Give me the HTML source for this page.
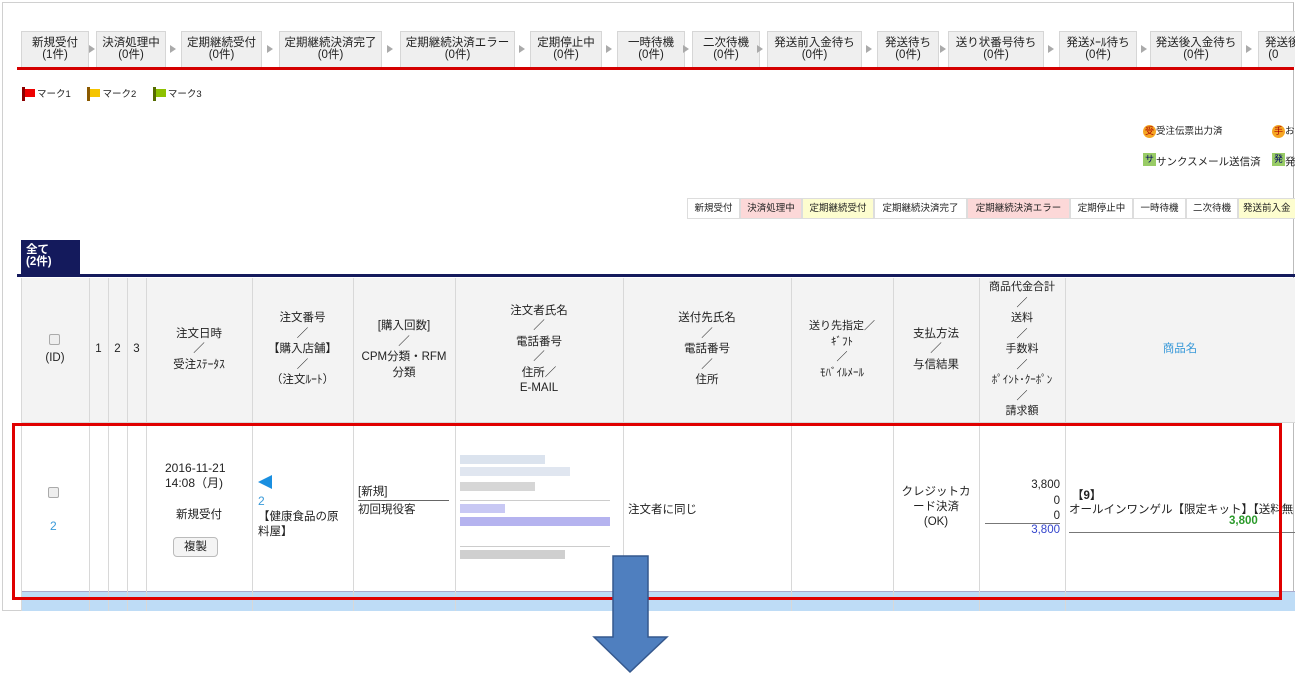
<!DOCTYPE html>
<html><head><meta charset="utf-8">
<style>
*{margin:0;padding:0;box-sizing:border-box}
body{width:1295px;height:674px;background:#fff;position:relative;overflow:hidden;font-family:"Liberation Sans","Noto Sans CJK JP",sans-serif;font-size:11px;color:#222}
.a{position:absolute}
.frame{left:2px;top:2px;width:1292px;height:609px;border:1px solid #d0d0d0;border-right:1px solid #bbb}
.tab{position:absolute;top:31px;height:36px;background:#efefef;border:1px solid #d6d6d6;border-bottom:none;text-align:center;font-size:11.5px;line-height:12px;padding-top:5px;white-space:nowrap;overflow:hidden}
.tri{position:absolute;top:45px;width:0;height:0;border-left:6px solid #aaa;border-top:4px solid transparent;border-bottom:4px solid transparent}
.leg{position:absolute;top:198px;height:21px;border:1px solid #ddd;font-size:9.5px;line-height:19px;text-align:center;white-space:nowrap;overflow:hidden}
.col{position:absolute;top:278px;height:333px;border-left:1px solid #d8d8d8}
.h{position:absolute;top:278px;height:144px;display:flex;align-items:center;justify-content:center;text-align:center;font-size:11.5px;line-height:15.5px;background:#f3f3f3}
.cb{width:11px;height:11px;border:1px solid #aaa;border-radius:2px;background:#eee;display:inline-block}
.blur{position:absolute;height:9px}
</style></head><body>
<div class="a frame"></div>

<div class="tab" style="left:21px;width:68px">新規受付<br>(1件)</div><div class="tri" style="left:89px"></div>
<div class="tab" style="left:96px;width:70px">決済処理中<br>(0件)</div><div class="tri" style="left:170px"></div>
<div class="tab" style="left:181px;width:81px">定期継続受付<br>(0件)</div><div class="tri" style="left:267px"></div>
<div class="tab" style="left:279px;width:103px">定期継続決済完了<br>(0件)</div><div class="tri" style="left:387px"></div>
<div class="tab" style="left:400px;width:115px">定期継続決済エラー<br>(0件)</div><div class="tri" style="left:519px"></div>
<div class="tab" style="left:530px;width:72px">定期停止中<br>(0件)</div><div class="tri" style="left:606px"></div>
<div class="tab" style="left:617px;width:68px">一時待機<br>(0件)</div>
<div class="tri" style="left:683px"></div>
<div class="tab" style="left:692px;width:68px">二次待機<br>(0件)</div>
<div class="tri" style="left:757px"></div>
<div class="tab" style="left:767px;width:95px">発送前入金待ち<br>(0件)</div><div class="tri" style="left:866px"></div>
<div class="tab" style="left:877px;width:62px">発送待ち<br>(0件)</div><div class="tri" style="left:940px"></div>
<div class="tab" style="left:948px;width:96px">送り状番号待ち<br>(0件)</div><div class="tri" style="left:1048px"></div>
<div class="tab" style="left:1059px;width:78px">発送ﾒｰﾙ待ち<br>(0件)</div><div class="tri" style="left:1141px"></div>
<div class="tab" style="left:1150px;width:92px">発送後入金待ち<br>(0件)</div><div class="tri" style="left:1246px"></div>
<div class="tab" style="left:1258px;width:40px;text-align:left;padding-left:6px">発送後<br>&nbsp;(0</div>
<div class="a" style="left:17px;top:67px;width:1277px;height:3px;background:#d40000"></div>

<div class="a" style="left:22px;top:87px;font-size:9.5px;line-height:12px">
<span style="display:inline-block;width:3px;height:14px;background:#8b0000;vertical-align:-4px"></span><span style="display:inline-block;width:10px;height:8px;background:#e00;vertical-align:0px;margin-right:2px"></span>マーク1
<span style="display:inline-block;width:3px;height:14px;background:#8b5a00;vertical-align:-4px;margin-left:14px"></span><span style="display:inline-block;width:10px;height:8px;background:#f5c400;margin-right:2px"></span>マーク2
<span style="display:inline-block;width:3px;height:14px;background:#556b00;vertical-align:-4px;margin-left:14px"></span><span style="display:inline-block;width:10px;height:8px;background:#8dc100;margin-right:2px"></span>マーク3</div>

<div class="a" style="left:1143px;top:123px;font-size:9.5px;white-space:nowrap"><span style="display:inline-block;width:13px;height:13px;border-radius:50%;background:#f5a623;color:#a00;font-size:9px;text-align:center;line-height:13px">受</span>受注伝票出力済</div>
<div class="a" style="left:1272px;top:123px;font-size:9.5px;white-space:nowrap"><span style="display:inline-block;width:13px;height:13px;border-radius:50%;background:#f5a623;color:#a00;font-size:9px;text-align:center;line-height:13px">手</span>お</div>
<div class="a" style="left:1143px;top:153px;font-size:10.5px;white-space:nowrap"><span style="display:inline-block;width:13px;height:13px;background:#9c6;color:#006;font-size:9px;text-align:center;line-height:13px;vertical-align:3px">サ</span>サンクスメール送信済</div>
<div class="a" style="left:1272px;top:153px;font-size:10.5px;white-space:nowrap"><span style="display:inline-block;width:13px;height:13px;background:#9c6;color:#006;font-size:9px;text-align:center;line-height:13px;vertical-align:3px">発</span>発</div>

<div class="leg" style="left:687px;width:53px">新規受付</div>
<div class="leg" style="left:740px;width:62px;background:#fcd8d8">決済処理中</div>
<div class="leg" style="left:802px;width:72px;background:#fdfdcf">定期継続受付</div>
<div class="leg" style="left:874px;width:93px">定期継続決済完了</div>
<div class="leg" style="left:967px;width:103px;background:#fcd8d8">定期継続決済エラー</div>
<div class="leg" style="left:1070px;width:63px">定期停止中</div>
<div class="leg" style="left:1133px;width:53px">一時待機</div>
<div class="leg" style="left:1186px;width:52px">二次待機</div>
<div class="leg" style="left:1238px;width:60px;background:#fdfdcf;text-align:left;padding-left:4px">発送前入金</div>

<div class="a" style="left:21px;top:240px;width:59px;height:34px;background:#141a5c;color:#fff;font-weight:bold;font-size:11.5px;line-height:12px;padding:4px 0 0 5px">全て<br>(2件)</div>
<div class="a" style="left:17px;top:274px;width:1278px;height:3px;background:#141a5c"></div>

<div class="a" style="left:21px;top:278px;width:1274px;height:144px;background:#f3f3f3"></div>
<div class="a" style="left:21px;top:422px;width:1274px;height:1px;background:#d8d8d8"></div>
<div class="a" style="left:21px;top:591px;width:1274px;height:20px;background:#bedcf6;border-top:1px solid #aac"></div>

<div class="h" style="left:21px;width:68px"><div><span class="cb"></span><br>(ID)</div></div>
<div class="h" style="left:89px;width:19px">1</div>
<div class="h" style="left:108px;width:19px">2</div>
<div class="h" style="left:127px;width:19px">3</div>
<div class="h" style="left:146px;width:106px">注文日時<br>／<br>受注ｽﾃｰﾀｽ</div>
<div class="h" style="left:252px;width:101px">注文番号<br>／<br>【購入店舗】<br>／<br>（注文ﾙｰﾄ）</div>
<div class="h" style="left:353px;width:102px">[購入回数]<br>／<br>CPM分類・RFM<br>分類</div>
<div class="h" style="left:455px;width:168px">注文者氏名<br>／<br>電話番号<br>／<br>住所／<br>E-MAIL</div>
<div class="h" style="left:623px;width:168px">送付先氏名<br>／<br>電話番号<br>／<br>住所</div>
<div class="h" style="left:791px;width:102px;font-size:11px">送り先指定／<br>ｷﾞﾌﾄ<br>／<br>ﾓﾊﾞｲﾙﾒｰﾙ</div>
<div class="h" style="left:893px;width:86px">支払方法<br>／<br>与信結果</div>
<div class="h" style="left:979px;width:86px;font-size:11px">商品代金合計<br>／<br>送料<br>／<br>手数料<br>／<br>ﾎﾟｲﾝﾄ･ｸｰﾎﾟﾝ<br>／<br>請求額</div>
<div class="h" style="left:1065px;width:230px;color:#3a9ad9">商品名</div>

<div class="col" style="left:21px"></div><div class="col" style="left:89px"></div><div class="col" style="left:108px"></div><div class="col" style="left:127px"></div><div class="col" style="left:146px"></div><div class="col" style="left:252px"></div><div class="col" style="left:353px"></div><div class="col" style="left:455px"></div><div class="col" style="left:623px"></div><div class="col" style="left:791px"></div><div class="col" style="left:893px"></div><div class="col" style="left:979px"></div><div class="col" style="left:1065px"></div>

<div class="a" style="left:48px;top:487px"><span class="cb"></span></div>
<div class="a" style="left:50px;top:519px;color:#3a9ad9;font-size:12px">2</div>
<div class="a" style="left:165px;top:461px;font-size:12px;line-height:15px">2016-11-21<br>14:08（月)</div>
<div class="a" style="left:176px;top:506px;font-size:11.5px">新規受付</div>
<div class="a" style="left:173px;top:537px;width:45px;height:20px;border:1px solid #bbb;border-radius:4px;background:#f4f4f4;font-size:11.5px;text-align:center;line-height:18px">複製</div>
<svg class="a" style="left:258px;top:475px" width="16" height="14"><polygon points="0,7 14,0 14,14" fill="#1a8fe0"/></svg>
<div class="a" style="left:258px;top:494px;color:#3a9ad9;font-size:12px">2</div>
<div class="a" style="left:258px;top:510px;font-size:11.5px;line-height:15px;width:90px">【健康食品の原<br>料屋】</div>
<div class="a" style="left:358px;top:485px;font-size:11.5px;line-height:14px">[新規]</div>
<div class="a" style="left:358px;top:500px;width:91px;height:1px;background:#666"></div>
<div class="a" style="left:358px;top:501px;font-size:11.5px">初回現役客</div>
<div class="blur" style="left:460px;top:455px;width:85px;background:#dbe3ee"></div>
<div class="blur" style="left:460px;top:467px;width:110px;background:#e0e6f0"></div>
<div class="blur" style="left:460px;top:482px;width:75px;background:#d6d6d6"></div>
<div class="a" style="left:460px;top:500px;width:150px;height:1px;background:#ccc"></div>
<div class="blur" style="left:460px;top:504px;width:45px;background:#c8c8f4"></div>
<div class="blur" style="left:460px;top:517px;width:150px;background:#b5b3ef"></div>
<div class="a" style="left:460px;top:546px;width:150px;height:1px;background:#ccc"></div>
<div class="blur" style="left:460px;top:550px;width:105px;background:#cfcfcf"></div>
<div class="a" style="left:628px;top:501px;font-size:11.5px">注文者に同じ</div>
<div class="a" style="left:893px;top:485px;width:86px;text-align:center;font-size:11.5px;line-height:15px">クレジットカ<br>ード決済<br>(OK)</div>
<div class="a" style="left:979px;top:478px;width:81px;text-align:right;font-size:11.5px;line-height:15.5px">3,800<br>0<br>0</div>
<div class="a" style="left:985px;top:523px;width:75px;height:1px;background:#777"></div>
<div class="a" style="left:979px;top:524px;width:81px;text-align:right;font-size:11.5px;color:#3344cc">3,800</div>
<div class="a" style="left:1072px;top:487px;font-size:11.5px;font-weight:bold">【9】</div>
<div class="a" style="left:1069px;top:501px;font-size:11.5px;white-space:nowrap">オールインワンゲル【限定キット】【送料無</div>
<div class="a" style="left:1229px;top:515px;font-size:11.5px;color:#2a9a2a;font-weight:bold">3,800</div>
<div class="a" style="left:1069px;top:532px;width:226px;height:1px;background:#777"></div>

<div class="a" style="left:12px;top:423px;width:1270px;height:177px;border:3px solid #e00000"></div>

<svg class="a" style="left:0;top:0" width="1295" height="674"><polygon points="613,556 648,556 648,637 667,637 630,672 594,637 613,637" fill="#4f7fbf" stroke="#35588d" stroke-width="1.5"/></svg>
</body></html>
